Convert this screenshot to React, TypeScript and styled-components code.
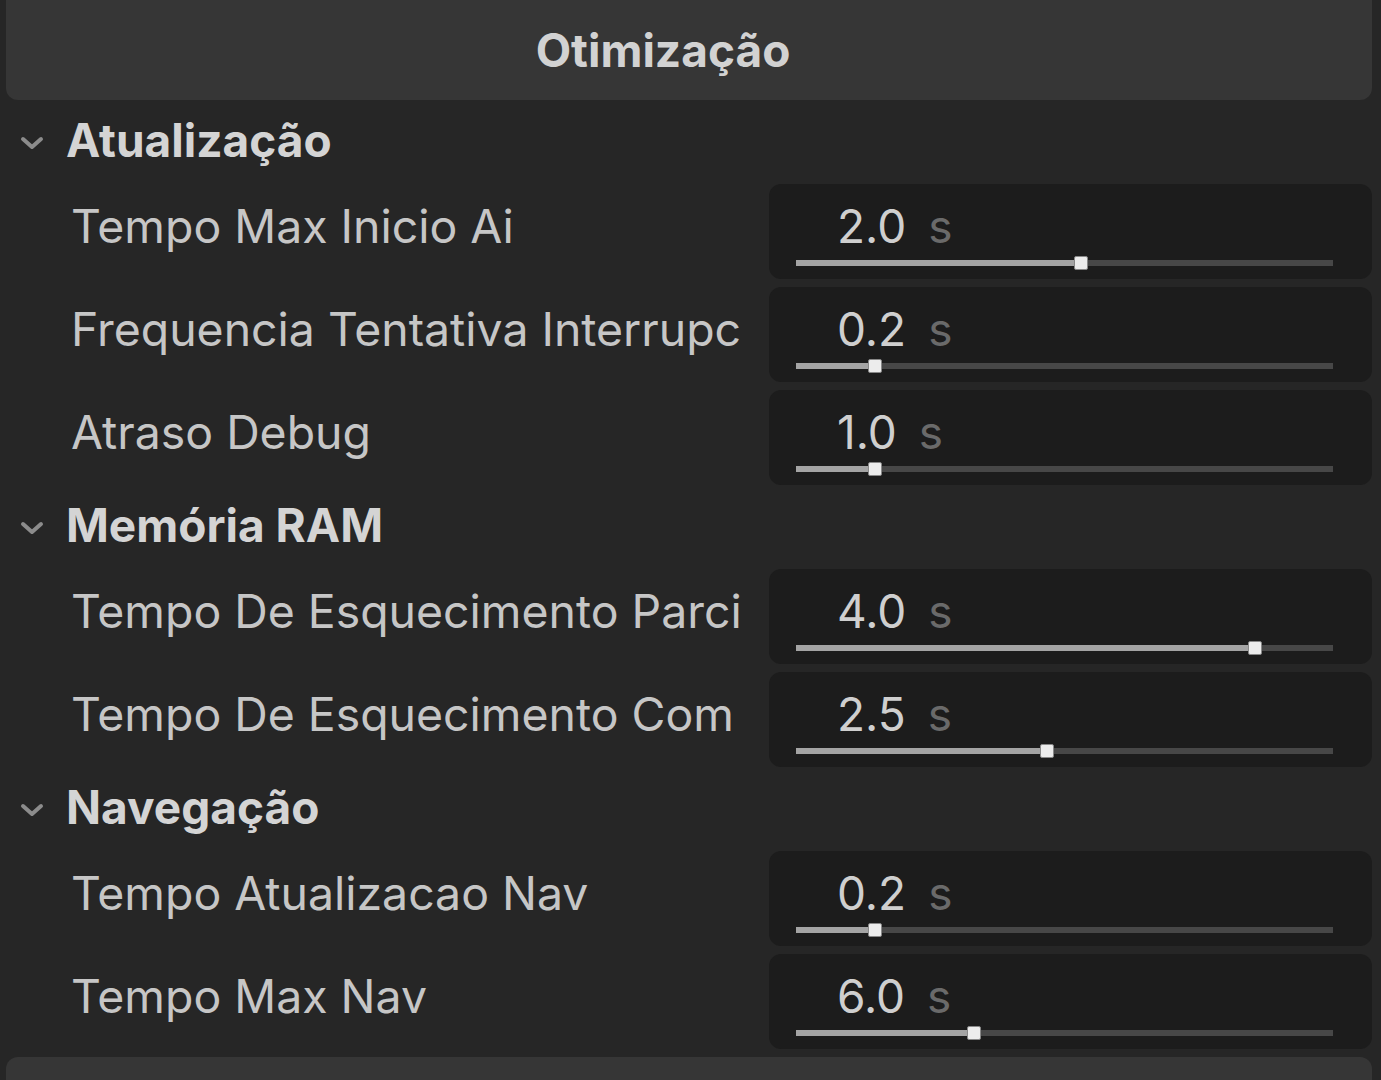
import React from "react";
import styled, { createGlobalStyle } from "styled-components";

const GlobalStyle = createGlobalStyle`
  html, body {
    margin: 0;
    padding: 0;
    background: #262626;
    font-family: Inter, "Noto Sans", sans-serif;
  }
  * { box-sizing: border-box; }
`;

const Painel = styled.div`
  width: 1381px;
  height: 1080px;
  overflow: hidden;
  background: #262626;
  padding: 0 9px 0 6px;
  display: flex;
  flex-direction: column;
`;

const Cabecalho = styled.div`
  height: 100px;
  margin-bottom: 8px;
  background: #363636;
  border-radius: 0 0 12px 12px;
  display: flex;
  align-items: center;
  justify-content: center;
  padding-right: 52px;
  font-weight: 700;
  font-size: 46px;
  color: #d2d2d2;
  flex-shrink: 0;
`;

const Secao = styled.div`
  height: 76px;
  display: flex;
  align-items: center;
  gap: 20px;
  padding-left: 12px;
  padding-bottom: 12px;
  font-weight: 700;
  font-size: 46px;
  color: #d4d4d4;
  flex-shrink: 0;
`;

const Seta = styled.svg`
  width: 28px;
  height: 20px;
  margin-top: 8px;
`;

const Linha = styled.div`
  height: 95px;
  margin-bottom: 8px;
  display: flex;
  align-items: stretch;
  flex-shrink: 0;
`;

const Rotulo = styled.div`
  width: 763px;
  padding-left: 65px;
  padding-right: 6px;
  display: flex;
  align-items: center;
  padding-bottom: 12px;
  font-size: 46.4px;
  color: #c6c6c6;
  white-space: nowrap;
  overflow: hidden;
`;

const Caixa = styled.div`
  flex: 1;
  background: #1c1c1c;
  border-radius: 12px;
  padding: 10px 39px 0 27px;
  display: flex;
  flex-direction: column;
`;

const Valor = styled.div`
  padding-left: 41px;
  height: 64px;
  display: flex;
  align-items: center;
  gap: 22px;
  font-size: 46px;
  color: #cfcfcf;
`;

const Unidade = styled.span`
  color: #6a6a6a;
`;

const Trilho = styled.div`
  position: relative;
  height: 6px;
  background: #474747;
  margin-top: 2px;
`;

const Preenchido = styled.div`
  height: 100%;
  background: #a4a4a4;
`;

const Pegador = styled.div`
  position: absolute;
  top: -4px;
  width: 14px;
  height: 14px;
  margin-left: -7px;
  background: #ececec;
  border: 1px solid #888;
  border-radius: 2px;
`;

const Rodape = styled.div`
  height: 60px;
  background: #363636;
  border-radius: 12px 12px 0 0;
  flex-shrink: 0;
`;

type Campo = { rotulo: string; valor: string; pos: number };

const secoes: { titulo: string; campos: Campo[] }[] = [
  {
    titulo: "Atualização",
    campos: [
      { rotulo: "Tempo Max Inicio Ai", valor: "2.0", pos: 0.53 },
      { rotulo: "Frequencia Tentativa Interrupc", valor: "0.2", pos: 0.147 },
      { rotulo: "Atraso Debug", valor: "1.0", pos: 0.147 },
    ],
  },
  {
    titulo: "Memória RAM",
    campos: [
      { rotulo: "Tempo De Esquecimento Parci", valor: "4.0", pos: 0.854 },
      { rotulo: "Tempo De Esquecimento Com", valor: "2.5", pos: 0.468 },
    ],
  },
  {
    titulo: "Navegação",
    campos: [
      { rotulo: "Tempo Atualizacao Nav", valor: "0.2", pos: 0.147 },
      { rotulo: "Tempo Max Nav", valor: "6.0", pos: 0.332 },
    ],
  },
];

const Chevron = () => (
  <Seta viewBox="0 0 28 20">
    <path d="M5 5 L14 13 L23 5" stroke="#8c8c8c" strokeWidth="4" fill="none" strokeLinecap="round" strokeLinejoin="round" />
  </Seta>
);

const App = () => {
  return (
    <>
      <GlobalStyle />
      <Painel>
        <Cabecalho>Otimização</Cabecalho>
        {secoes.map((s) => (
          <React.Fragment key={s.titulo}>
            <Secao>
              <Chevron />
              {s.titulo}
            </Secao>
            {s.campos.map((c) => (
              <Linha key={c.rotulo}>
                <Rotulo>{c.rotulo}</Rotulo>
                <Caixa>
                  <Valor>
                    {c.valor}
                    <Unidade>s</Unidade>
                  </Valor>
                  <Trilho>
                    <Preenchido style={{ width: `${c.pos * 100}%` }} />
                    <Pegador style={{ left: `${c.pos * 100}%` }} />
                  </Trilho>
                </Caixa>
              </Linha>
            ))}
          </React.Fragment>
        ))}
        <Rodape />
      </Painel>
    </>
  );
};

export default App;
